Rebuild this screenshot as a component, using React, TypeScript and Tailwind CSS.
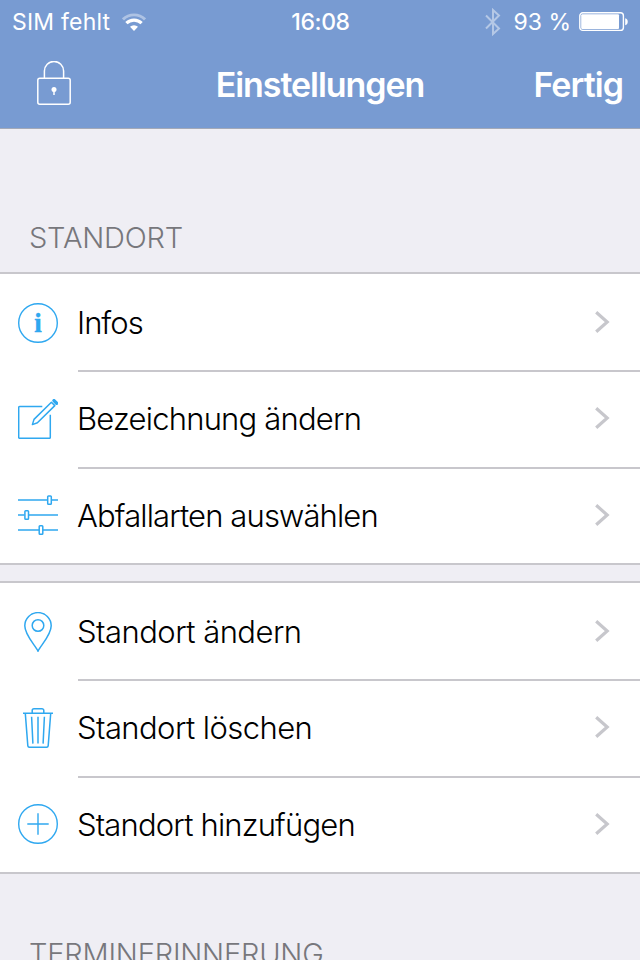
import type { ReactNode } from 'react';

interface SettingsItem {
  label: string;
  icon: ReactNode;
  tracking: string;
}

const InfoIcon = () => (
  <svg viewBox="0 0 40 40" className="size-10" fill="none" stroke="#2fa8f0" strokeWidth="1.4">
    <circle cx="20" cy="20" r="19.3" />
    <text
      x="20"
      y="29"
      textAnchor="middle"
      stroke="#2fa8f0"
      strokeWidth="0.4"
      className="fill-[#2fa8f0] font-['Liberation_Serif',serif] text-[27px] font-bold"
    >
      i
    </text>
  </svg>
);

const EditIcon = () => (
  <svg viewBox="0 0 40 40" className="size-10" fill="none" stroke="#2fa8f0" strokeWidth="1.5">
    <path d="M24.3 7.6H1.6a.9.9 0 0 0-.9.9v29.9a.9.9 0 0 0 .9.9h29.8a.9.9 0 0 0 .9-.9V15.8" />
    <path d="M14.4 25.6l1.6-5.2L33.4 3.2l3.4 3.4-17.4 17.2z" strokeLinejoin="round" />
    <path d="M36 1.6l2.6 2.6" strokeWidth="3.4" strokeLinecap="round" />
  </svg>
);

const SlidersIcon = () => (
  <svg viewBox="0 0 40 40" className="size-10" fill="none" stroke="#2fa8f0" strokeWidth="1.5">
    <path d="M0 5h29.5M33.5 5H40M0 20h6.5M10.5 20H40M0 35h21M25 35h15" />
    <rect x="29.7" y="0.9" width="3.6" height="8.4" rx="0.8" />
    <rect x="6.9" y="15.8" width="3.6" height="8.4" rx="0.8" />
    <rect x="21.2" y="30.8" width="3.6" height="8.4" rx="0.8" />
  </svg>
);

const PinIcon = () => (
  <svg viewBox="0 0 40 40" className="size-10" fill="none" stroke="#2fa8f0" strokeWidth="1.5">
    <path d="M20 39.2C17.6 33.6 6.8 23.4 6.8 13.8a13.2 13.2 0 0 1 26.4 0C33.2 23.4 22.4 33.6 20 39.2z" />
    <circle cx="20" cy="13.5" r="5.8" />
  </svg>
);

const TrashIcon = () => (
  <svg viewBox="0 0 40 40" className="size-10" fill="none" stroke="#2fa8f0" strokeWidth="1.5">
    <path d="M5 5.2h30M14.2 5V2.6a1.8 1.8 0 0 1 1.8-1.8h8a1.8 1.8 0 0 1 1.8 1.8V5" />
    <path d="M7.3 5.4l2.5 32.2a1.8 1.8 0 0 0 1.8 1.7h16.8a1.8 1.8 0 0 0 1.8-1.7l2.5-32.2" />
    <path d="M13.6 8.8l1.3 26.8M20 8.8v26.8M26.4 8.8l-1.3 26.8" />
  </svg>
);

const PlusIcon = () => (
  <svg viewBox="0 0 40 40" className="size-10" fill="none" stroke="#2fa8f0" strokeWidth="1.4">
    <circle cx="20" cy="20" r="19.3" />
    <path d="M20 9.3v21.4M9.3 20h21.4" />
  </svg>
);

const Chevron = () => (
  <svg viewBox="0 0 16 24" className="mt-[7px] h-6 w-4" fill="none" stroke="#c7c7cc" strokeWidth="3.2">
    <path d="M2.2 2.2L13.2 12 2.2 21.8" />
  </svg>
);

const iconSizes = ['h-24 pt-[29px]', 'h-[95px] pt-[27px]', 'h-[94px] pt-[26px]'];
const labelSizes = ['h-24 pt-[29px]', 'h-[95px] pt-[27px]', 'h-[94px] pt-[27px]'];

const locationItems: SettingsItem[] = [
  { label: 'Infos', icon: <InfoIcon />, tracking: 'tracking-[-1px]' },
  { label: 'Bezeichnung ändern', icon: <EditIcon />, tracking: 'tracking-[-0.8px]' },
  { label: 'Abfallarten auswählen', icon: <SlidersIcon />, tracking: 'tracking-[-0.87px]' },
];

const manageItems: SettingsItem[] = [
  { label: 'Standort ändern', icon: <PinIcon />, tracking: 'tracking-[-0.53px]' },
  { label: 'Standort löschen', icon: <TrashIcon />, tracking: 'tracking-[-0.57px]' },
  { label: 'Standort hinzufügen', icon: <PlusIcon />, tracking: 'tracking-[-0.83px]' },
];

const SettingsGroup = ({ items }: { items: SettingsItem[] }) => (
  <ul className="border-y-2 border-[#c8c7cc] bg-white pl-[18px]">
    {items.map((item, index) => (
      <li key={item.label} className="flex">
        <div className={`shrink-0 ${iconSizes[index]}`}>{item.icon}</div>
        <div
          className={`ml-5 flex-1 pr-[30px] ${
            index < items.length - 1 ? 'border-b-2 border-[#c8c7cc]' : ''
          }`}
        >
          <div className={`flex justify-between ${labelSizes[index]}`}>
            <span className={`-ml-px text-[31px] leading-10 font-light whitespace-nowrap text-black ${item.tracking}`}>
              {item.label}
            </span>
            <Chevron />
          </div>
        </div>
      </li>
    ))}
  </ul>
);

const StatusBar = () => (
  <div className="grid h-10 grid-cols-[200px_1fr_200px] items-center pt-0.5 pr-[11px] pl-3 text-[23px] leading-10">
    <div className="flex items-center gap-3">
      <span className="tracking-[0.2px] whitespace-nowrap">SIM fehlt</span>
      <svg viewBox="0 0 24 18" className="h-[18px] w-6" fill="none" stroke="#ffffff">
        <path d="M1 6.4a15.6 15.6 0 0 1 22 0" strokeWidth="2.9" opacity="0.4" />
        <path d="M4.4 10.2a10.8 10.8 0 0 1 15.2 0" strokeWidth="3.2" />
        <path d="M12 18l-4-4.2a5.8 5.8 0 0 1 8 0z" fill="#ffffff" stroke="none" />
      </svg>
    </div>
    <span className="text-center font-medium tracking-[-0.4px]">16:08</span>
    <div className="flex items-center justify-end">
      <svg viewBox="0 0 16 28" className="mr-3 h-7 w-4" fill="none" stroke="#ffffff" strokeWidth="2" opacity="0.45">
        <path d="M1 7.5l13 13L8 26V2l6 5.5-13 13" />
      </svg>
      <span className="mr-2 whitespace-nowrap">93 %</span>
      <svg viewBox="0 0 50 20" className="h-5 w-[50px]" fill="none">
        <rect x="0.8" y="0.8" width="43.6" height="17.6" rx="3" stroke="#ffffff" strokeWidth="1.4" />
        <rect x="2.2" y="2.3" width="37.8" height="14.8" rx="1" fill="#ffffff" />
        <path d="M46.2 6.2c3.4.6 3.4 6.4 0 7z" fill="#ffffff" />
      </svg>
    </div>
  </div>
);

const LockIcon = () => (
  <svg viewBox="0 0 34 46" className="h-[46px] w-[34px]" fill="none" stroke="#ffffff" strokeWidth="1.5">
    <rect x="0.8" y="17.2" width="32.4" height="26" rx="2" />
    <path d="M7.4 17V10a9.6 9.6 0 0 1 19.2 0v7" />
    <circle cx="17" cy="28.4" r="2.5" fill="#ffffff" stroke="none" />
    <path d="M17 29v5" />
  </svg>
);

const Header = () => (
  <header className="h-[129px] border-b border-[#a3a9b8] bg-[#789bd2] text-white">
    <StatusBar />
    <div className="grid h-[88px] grid-cols-[190px_1fr_190px] items-center text-[34px] font-semibold">
      <div className="pl-[37px]">
        <LockIcon />
      </div>
      <h1 className="text-center tracking-[-1.05px]">Einstellungen</h1>
      <span className="pr-[17px] text-right tracking-[-0.95px]">Fertig</span>
    </div>
  </header>
);

export default function App() {
  return (
    <div className="flex h-[960px] w-[640px] flex-col overflow-hidden bg-[#efeef4] font-[Inter,sans-serif]">
      <Header />
      <main>
        <h2 className="h-[143px] pt-[89px] pl-[29px] text-[29px] leading-10 font-light tracking-[-0.2px] text-[#77777c]">
          STANDORT
        </h2>
        <SettingsGroup items={locationItems} />
        <div className="h-4" />
        <SettingsGroup items={manageItems} />
        <h2 className="pt-[60px] pl-[29px] text-[29px] leading-10 font-light tracking-[-0.2px] whitespace-nowrap text-[#77777c]">
          TERMINERINNERUNG
        </h2>
      </main>
    </div>
  );
}
